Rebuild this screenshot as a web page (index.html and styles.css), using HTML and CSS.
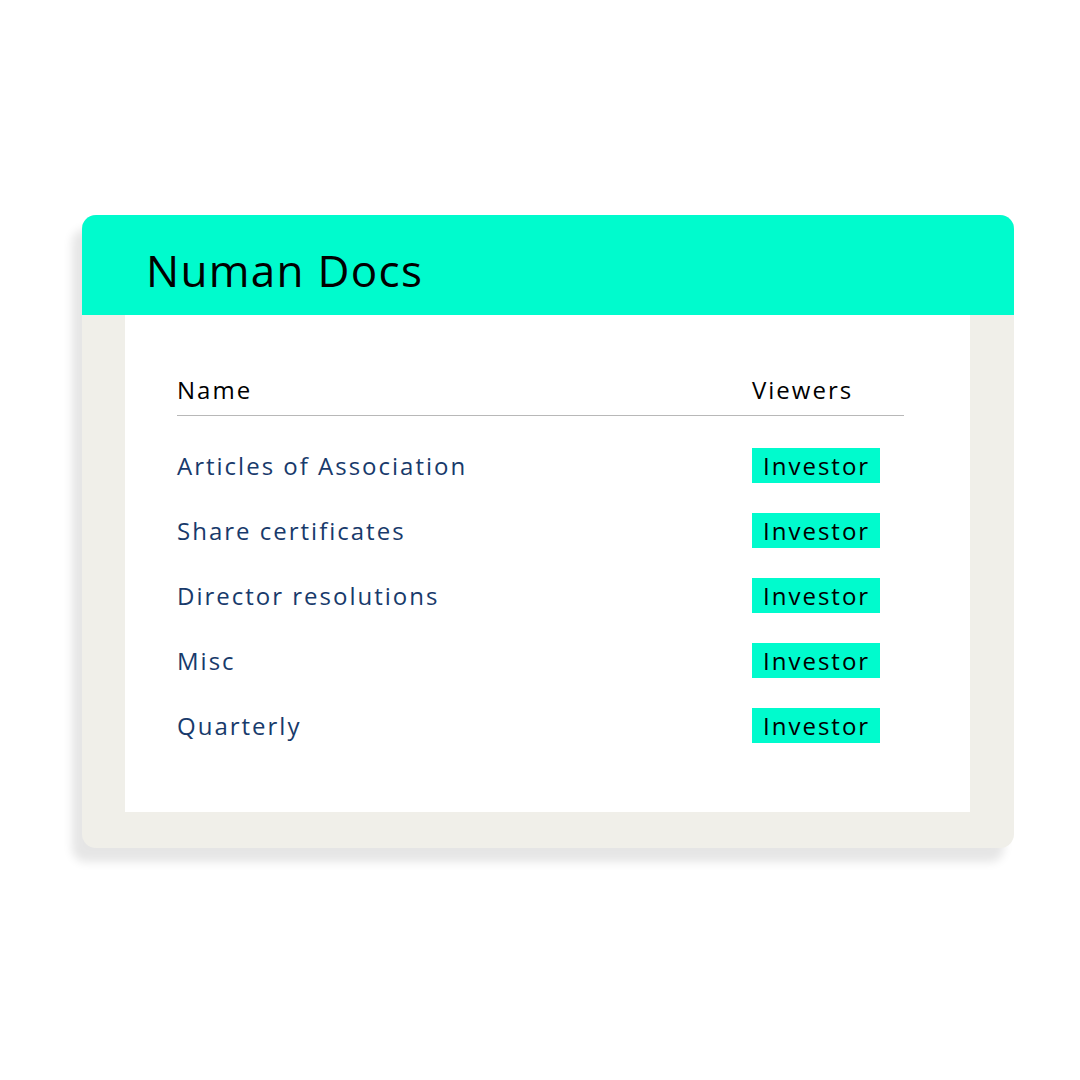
FILE: index.html
```html
<!DOCTYPE html>
<html lang="en">
<head>
    <meta charset="UTF-8">
    <title>Numan Docs</title>
    <link rel="stylesheet" href="styles.css">
</head>
<body>
    <div class="card">
        <div class="card-header">
            <h1>Numan Docs</h1>
        </div>
        <div class="card-body">
            <div class="panel">
                <div class="list-head">
                    <span class="name">Name</span>
                    <span class="viewers">Viewers</span>
                </div>
                <ul class="docs">
                    <li>
                        <span class="name">Articles of Association</span>
                        <span class="viewers"><span class="badge">Investor</span></span>
                    </li>
                    <li>
                        <span class="name">Share certificates</span>
                        <span class="viewers"><span class="badge">Investor</span></span>
                    </li>
                    <li>
                        <span class="name">Director resolutions</span>
                        <span class="viewers"><span class="badge">Investor</span></span>
                    </li>
                    <li>
                        <span class="name">Misc</span>
                        <span class="viewers"><span class="badge">Investor</span></span>
                    </li>
                    <li>
                        <span class="name">Quarterly</span>
                        <span class="viewers"><span class="badge">Investor</span></span>
                    </li>
                </ul>
            </div>
        </div>
    </div>
</body>
</html>
```

FILE: styles.css
```css
* {
    margin: 0;
    padding: 0;
    box-sizing: border-box;
}

body {
    font-family: "Open Sans", "Liberation Sans", sans-serif;
    background: #fff;
    width: 1080px;
    height: 1080px;
    padding: 215px 0 0 82px;
}

.card {
    width: 932px;
    height: 633px;
    border-radius: 14px;
    background: #f0efe9;
    box-shadow: -10px 14px 10px rgba(0,0,0,0.1);
    display: flex;
    flex-direction: column;
}

.card-header {
    height: 100px;
    background: #00fbcd;
    border-radius: 14px 14px 0 0;
    display: flex;
    align-items: center;
    padding: 10px 0 0 64px;
}

h1 {
    font-weight: 400;
    font-size: 44px;
    color: #000;
    letter-spacing: 1.3px;
}

.card-body {
    flex: 1;
    padding: 0 44px 36px 43px;
    display: flex;
}

.panel {
    flex: 1;
    background: #fff;
    padding: 58px 66px 0 52px;
}

.list-head,
.docs li {
    display: flex;
    align-items: center;
    font-size: 24px;
    letter-spacing: 2px;
}

.list-head {
    height: 43px;
    align-items: flex-start;
    border-bottom: 1px solid #b8b8b8;
    color: #000;
}

.name {
    flex: 1;
}

.viewers {
    width: 152px;
    flex-shrink: 0;
}

.docs li .viewers {
    margin-left: -1px;
}

.docs {
    list-style: none;
    padding-top: 17px;
}

.docs li {
    height: 65px;
    color: #183a6b;
}

.badge {
    display: inline-block;
    width: 128px;
    height: 35px;
    line-height: 35px;
    padding-left: 11px;
    background: #00fbcd;
    color: #000;
}
```
